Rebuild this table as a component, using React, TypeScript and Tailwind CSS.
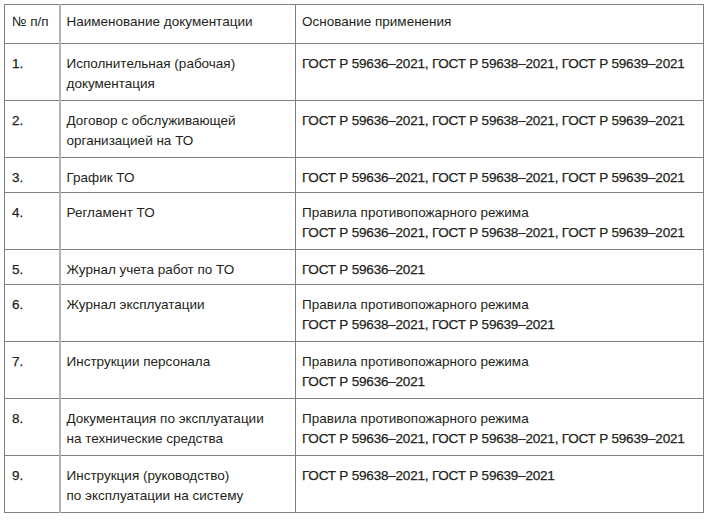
const rows = [
  { n: '1.', doc: ['Исполнительная (рабочая)', 'документация'], base: [{ t: 'ГОСТ Р 59636–2021, ГОСТ Р 59638–2021, ГОСТ Р 59639–2021', g: true }] },
  { n: '2.', doc: ['Договор с обслуживающей', 'организацией на ТО'], base: [{ t: 'ГОСТ Р 59636–2021, ГОСТ Р 59638–2021, ГОСТ Р 59639–2021', g: true }] },
  { n: '3.', doc: ['График ТО'], base: [{ t: 'ГОСТ Р 59636–2021, ГОСТ Р 59638–2021, ГОСТ Р 59639–2021', g: true }] },
  {
    n: '4.',
    doc: ['Регламент ТО'],
    base: [
      { t: 'Правила противопожарного режима', g: false },
      { t: 'ГОСТ Р 59636–2021, ГОСТ Р 59638–2021, ГОСТ Р 59639–2021', g: true },
    ],
  },
  { n: '5.', doc: ['Журнал учета работ по ТО'], base: [{ t: 'ГОСТ Р 59636–2021', g: true }] },
  {
    n: '6.',
    doc: ['Журнал эксплуатации'],
    base: [
      { t: 'Правила противопожарного режима', g: false },
      { t: 'ГОСТ Р 59638–2021, ГОСТ Р 59639–2021', g: true },
    ],
  },
  {
    n: '7.',
    doc: ['Инструкции персонала'],
    base: [
      { t: 'Правила противопожарного режима', g: false },
      { t: 'ГОСТ Р 59636–2021', g: true },
    ],
  },
  {
    n: '8.',
    doc: ['Документация по эксплуатации', 'на технические средства'],
    base: [
      { t: 'Правила противопожарного режима', g: false },
      { t: 'ГОСТ Р 59636–2021, ГОСТ Р 59638–2021, ГОСТ Р 59639–2021', g: true },
    ],
  },
  { n: '9.', doc: ['Инструкция (руководство)', 'по эксплуатации на систему'], base: [{ t: 'ГОСТ Р 59638–2021, ГОСТ Р 59639–2021', g: true }] },
];

// GOST references are set a touch heavier in the print
const heavy = '[-webkit-text-stroke:0.25px_#231f20]';

export default function App() {
  return (
    <div className="min-h-[521px] bg-white pl-[4px] pt-[4px] text-[13.5px] leading-[20px] text-[#231f20] [font-family:'Liberation_Sans',Arial,sans-serif]">
      <table className="w-[699px] table-fixed border-collapse">
        <colgroup>
          <col className="w-[55px]" />
          <col className="w-[236px]" />
          <col className="w-[408px]" />
        </colgroup>
        <thead>
          <tr className="h-[39px]">
            <th className="border border-[#808080] border-r-2 border-r-[#b4b4b4] px-[7px] pb-[10px] pt-[7px] text-left align-top font-normal">№ п/п</th>
            <th className="border border-[#808080] px-[6px] pb-[10px] pt-[7px] text-left align-top font-normal">Наименование документации</th>
            <th className="border border-[#808080] px-[6px] pb-[10px] pt-[7px] text-left align-top font-normal">Основание применения</th>
          </tr>
        </thead>
        <tbody>
          {rows.map((r) => {
            const single = r.doc.length === 1 && r.base.length === 1;
            const pad = single ? 'pb-[4px] pt-[10px]' : 'pb-[6px] pt-[10px]';
            return (
              <tr key={r.n}>
                <td className={`border border-[#808080] border-r-2 border-r-[#b4b4b4] px-[7px] align-top ${pad} ${heavy}`}>{r.n}</td>
                <td className={`border border-[#808080] px-[6px] align-top ${pad}`}>
                  {r.doc.map((d) => (
                    <div key={d}>{d}</div>
                  ))}
                </td>
                <td className={`border border-[#808080] px-[6px] align-top ${pad}`}>
                  {r.base.map((b) => (
                    <div key={b.t} className={b.g ? `whitespace-nowrap tracking-[-0.2px] ${heavy}` : ''}>
                      {b.t}
                    </div>
                  ))}
                </td>
              </tr>
            );
          })}
        </tbody>
      </table>
    </div>
  );
}
